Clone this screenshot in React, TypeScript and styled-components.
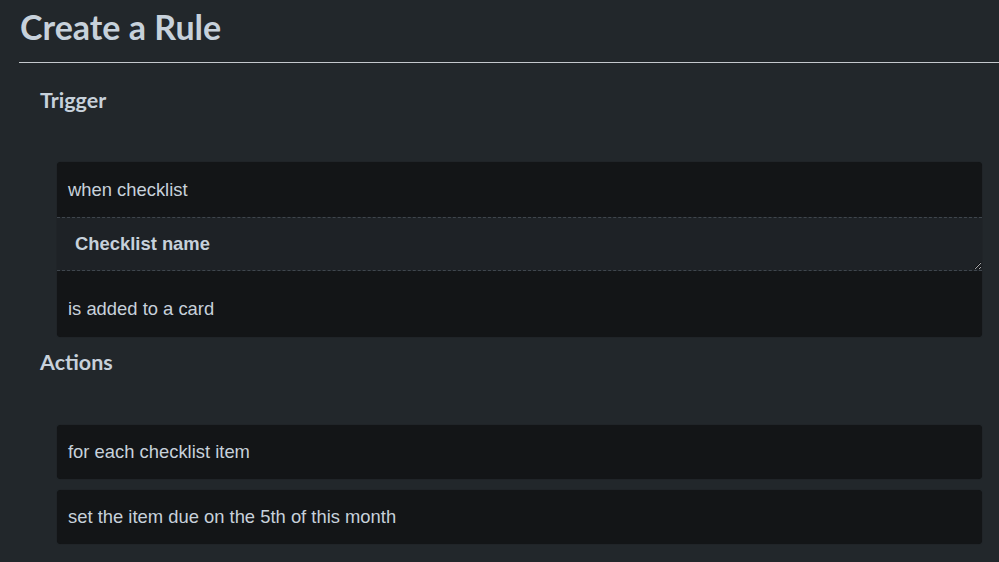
import React from "react";
import styled, { createGlobalStyle } from "styled-components";

const Global = createGlobalStyle`
  html, body { margin: 0; padding: 0; background: #22272b; }
  body { overflow: hidden; }
  * { box-sizing: border-box; }
`;

const Page = styled.div`
  width: 999px;
  height: 562px;
  background: #22272b;
  padding: 0 0 0 19px;
  color: #c7d1db;
`;

const Title = styled.h1`
  margin: 0;
  padding: 6px 0 0 1px;
  height: 63px;
  font-family: Lato, "Liberation Sans", sans-serif;
  font-weight: 700;
  font-size: 34px;
  line-height: 42px;
  color: #c7d1db;
  border-bottom: 1px solid #c4c8cc;
`;

const SectionTitle = styled.h2<{ $top: number; $h: number }>`
  margin: 0;
  padding-left: 21px;
  font-family: Lato, "Liberation Sans", sans-serif;
  font-weight: 700;
  font-size: 21.5px;
  line-height: 26px;
  color: #c7d1db;
  padding-top: ${(p) => p.$top}px;
  height: ${(p) => p.$h}px;
`;

const List = styled.div`
  margin-left: 38px;
  width: 925px;
  display: flex;
  flex-direction: column;
  gap: 11px;
`;

const Card = styled.div`
  background: #131517;
  border-radius: 4px;
  box-shadow: 0 0 1px rgba(0, 0, 0, 0.6);
  overflow: hidden;
  display: flex;
  flex-direction: column;
`;

const Row = styled.div<{ $h: number; $pt?: number }>`
  height: ${(p) => p.$h}px;
  padding: ${(p) => p.$pt ?? 0}px 11px 0;
  display: flex;
  align-items: ${(p) => (p.$pt ? "flex-start" : "center")};
  font-family: "Liberation Sans", Arial, sans-serif;
  font-size: 18.4px;
  line-height: 22px;
  color: #c7d1db;
`;

const Field = styled.textarea`
  display: block;
  width: 100%;
  height: 54px;
  margin: 0;
  padding: 15px 18px;
  background: #1e2226;
  border: none;
  border-top: 1px dashed #3f464d;
  border-bottom: 1px dashed #3f464d;
  font-family: "Liberation Sans", Arial, sans-serif;
  font-weight: 700;
  font-size: 18.4px;
  line-height: 22px;
  color: #c7d1db;
  resize: vertical;
  outline: none;
  &::placeholder { color: #c7d1db; opacity: 1; }
`;

export default function App() {
  return (
    <>
      <Global />
      <Page>
        <Title>Create a Rule</Title>
        <SectionTitle $top={24} $h={99}>Trigger</SectionTitle>
        <List>
          <Card>
            <Row $h={55}>when checklist</Row>
            <Field placeholder="Checklist name" />
            <Row $h={66} $pt={27}>is added to a card</Row>
          </Card>
        </List>
        <SectionTitle $top={12} $h={88}>Actions</SectionTitle>
        <List>
          <Card>
            <Row $h={54}>for each checklist item</Row>
          </Card>
          <Card>
            <Row $h={54}>set the item due on the 5th of this month</Row>
          </Card>
        </List>
      </Page>
    </>
  );
}
